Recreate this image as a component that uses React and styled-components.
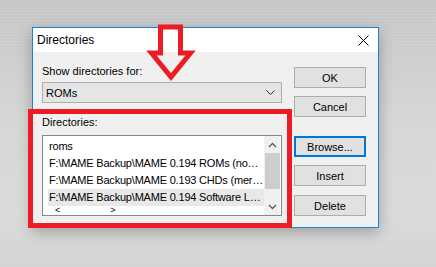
import React from 'react';
import styled, { createGlobalStyle } from 'styled-components';

const GlobalStyle = createGlobalStyle`
  html, body { margin: 0; padding: 0; }
  body {
    font-family: "Liberation Sans", Arial, sans-serif;
    font-size: 11px;
    color: #000;
  }
`;

const Page = styled.div`
  position: relative;
  width: 436px;
  height: 267px;
  overflow: hidden;
  box-sizing: border-box;
  padding: 27px 0 0 32px;
  background:
    repeating-linear-gradient(0deg, rgba(255, 255, 255, 0.07) 0 1px, transparent 1px 3px),
    linear-gradient(180deg, #c7c7c7 0%, #d6d6d6 45%, #dadada 80%, #d3d3d3 100%);
`;

const Window = styled.div`
  width: 347px;
  height: 201px;
  box-sizing: border-box;
  border: 1px solid #1883d7;
  background: #f0f0f0;
  box-shadow: 0 4px 14px rgba(0, 0, 0, 0.28);
  display: flex;
  flex-direction: column;
`;

const TitleBar = styled.div`
  height: 24px;
  background: #fff;
  display: flex;
  align-items: center;
  justify-content: space-between;
  padding: 0 9px 0 4px;
`;

const Title = styled.span`
  font-size: 12px;
`;

const Body = styled.div`
  display: flex;
  gap: 12px;
  padding: 12px 11px 0 9px;
`;

const LeftCol = styled.div`
  width: 240px;
  display: flex;
  flex-direction: column;
`;

const RightCol = styled.div`
  width: 72px;
  padding-top: 3px;
  display: flex;
  flex-direction: column;
`;

const Label = styled.div`
  height: 14px;
  line-height: 14px;
  margin-top: ${p => p.$gap || 0}px;
`;

const Combo = styled.div`
  margin-top: 4px;
  height: 21px;
  box-sizing: border-box;
  border: 1px solid #adadad;
  background: #e5e5e5;
  display: flex;
  align-items: center;
  justify-content: space-between;
  padding: 0 6px 0 3px;
`;

const ListBox = styled.div`
  margin-top: 6px;
  height: 81px;
  box-sizing: border-box;
  border: 1px solid #828790;
  background: #fff;
  display: flex;
  overflow: hidden;
`;

const Rows = styled.div`
  flex: 1;
  min-width: 0;
  padding: 2px 0 0 5px;
  overflow: hidden;
`;

const Row = styled.div`
  height: 17px;
  line-height: 17px;
  padding-left: 1px;
  white-space: nowrap;
  letter-spacing: -0.2px;
  background: ${p => (p.$selected ? '#e8e8e8' : 'transparent')};
`;

const HScroll = styled.div`
  display: flex;
  gap: 50px;
  padding: 1px 0 0 7px;
  font-size: 9px;
  line-height: 6px;
`;

const VScroll = styled.div`
  width: 16px;
  background: #f0f0f0;
  display: flex;
  flex-direction: column;
  align-items: center;
  margin-right: 1px;
`;

const ScrollArrow = styled.div`
  height: 17px;
  display: flex;
  align-items: center;
  justify-content: center;
`;

const Thumb = styled.div`
  width: 15px;
  height: 36px;
  background: #cdcdcd;
`;

const Track = styled.div`
  flex: 1;
`;

const Button = styled.div`
  height: 21px;
  box-sizing: border-box;
  margin-top: ${p => p.$gap || 0}px;
  border: ${p => (p.$focused ? '2px solid #0078d7' : '1px solid #adadad')};
  background: #e1e1e1;
  display: flex;
  align-items: center;
  justify-content: center;
`;

const RedFrame = styled.div`
  position: absolute;
  left: 28px;
  top: 109px;
  width: 264px;
  height: 119px;
  box-sizing: border-box;
  border: 5px solid #ed1c24;
  pointer-events: none;
`;

const ArrowMark = styled.svg`
  position: absolute;
  left: 0;
  top: 0;
  pointer-events: none;
`;

const Chevron = ({ up }) => (
  <svg width="9" height="6" viewBox="0 0 9 6">
    <path
      d={up ? 'M1 5 L4.5 1.5 L8 5' : 'M1 1 L4.5 4.5 L8 1'}
      fill="none"
      stroke="#606060"
      strokeWidth="1.4"
    />
  </svg>
);

const rows = [
  'roms',
  'F:\\MAME Backup\\MAME 0.194 ROMs (no…',
  'F:\\MAME Backup\\MAME 0.193 CHDs (mer…',
  'F:\\MAME Backup\\MAME 0.194 Software L…',
];

export default function App() {
  return (
    <Page>
      <GlobalStyle />
      <Window>
        <TitleBar>
          <Title>Directories</Title>
          <svg width="11" height="11" viewBox="0 0 11 11">
            <path d="M0.5 0.5 L10.5 10.5 M10.5 0.5 L0.5 10.5" stroke="#000" strokeWidth="1" />
          </svg>
        </TitleBar>
        <Body>
          <LeftCol>
            <Label>Show directories for:</Label>
            <Combo>
              <span>ROMs</span>
              <svg width="9" height="6" viewBox="0 0 9 6">
                <path d="M0.5 0.5 L4.5 4.5 L8.5 0.5" fill="none" stroke="#333" strokeWidth="1" />
              </svg>
            </Combo>
            <Label $gap={12}>Directories:</Label>
            <ListBox>
              <Rows>
                {rows.map((r, i) => (
                  <Row key={i} $selected={i === 3}>{r}</Row>
                ))}
                <HScroll>
                  <span>&lt;</span>
                  <span>&gt;</span>
                </HScroll>
              </Rows>
              <VScroll>
                <ScrollArrow><Chevron up /></ScrollArrow>
                <Thumb />
                <Track />
                <ScrollArrow><Chevron /></ScrollArrow>
              </VScroll>
            </ListBox>
          </LeftCol>
          <RightCol>
            <Button>OK</Button>
            <Button $gap={8}>Cancel</Button>
            <Button $gap={19} $focused>Browse...</Button>
            <Button $gap={8}>Insert</Button>
            <Button $gap={9}>Delete</Button>
          </RightCol>
        </Body>
      </Window>
      <RedFrame />
      <ArrowMark width="436" height="267" viewBox="0 0 436 267">
        <path
          d="M160.5 27 L180.5 27 L180.5 53 L190.5 53 L171 77 L151.5 53 L160.5 53 Z"
          fill="none"
          stroke="#ed1c24"
          strokeWidth="5"
          strokeLinejoin="miter"
        />
      </ArrowMark>
    </Page>
  );
}
